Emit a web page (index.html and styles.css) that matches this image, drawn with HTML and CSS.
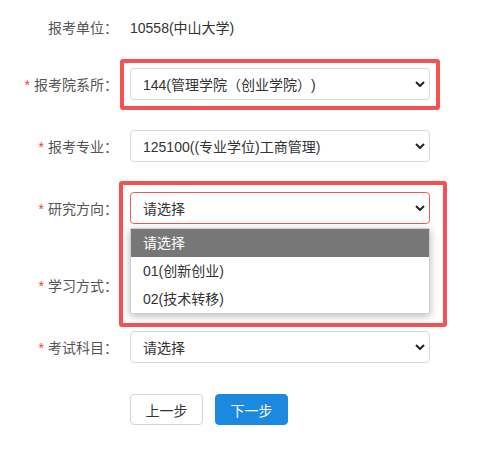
FILE: index.html
```html
<!DOCTYPE html>
<html lang="zh-CN">
<head>
<meta charset="utf-8">
<title>报考信息</title>
<link rel="stylesheet" href="styles.css">
</head>
<body>
<div class="page">
  <div class="form">
    <div class="row row-first">
      <div class="label">报考单位：</div>
      <div class="control value">10558(中山大学)</div>
    </div>
    <div class="row">
      <div class="label"><span class="req">*</span>报考院系所：</div>
      <div class="control select"><span class="sel-text">144(管理学院（创业学院）)</span><svg class="chev" width="10" height="6" viewBox="0 0 10 6"><path d="M1 1 L5 5 L9 1" fill="none" stroke="#222" stroke-width="2"/></svg></div>
    </div>
    <div class="row">
      <div class="label"><span class="req">*</span>报考专业：</div>
      <div class="control select"><span class="sel-text">125100((专业学位)工商管理)</span><svg class="chev" width="10" height="6" viewBox="0 0 10 6"><path d="M1 1 L5 5 L9 1" fill="none" stroke="#222" stroke-width="2"/></svg></div>
    </div>
    <div class="row">
      <div class="label"><span class="req">*</span>研究方向：</div>
      <div class="control select select-error"><span class="sel-text">请选择</span><svg class="chev" width="10" height="6" viewBox="0 0 10 6"><path d="M1 1 L5 5 L9 1" fill="none" stroke="#222" stroke-width="2"/></svg></div>
    </div>
    <div class="row row-tall">
      <div class="label"><span class="req">*</span>学习方式：</div>
      <div class="control select"><span class="sel-text"></span><svg class="chev" width="10" height="6" viewBox="0 0 10 6"><path d="M1 1 L5 5 L9 1" fill="none" stroke="#222" stroke-width="2"/></svg></div>
    </div>
    <div class="row row-last">
      <div class="label"><span class="req">*</span>考试科目：</div>
      <div class="control select"><span class="sel-text">请选择</span><svg class="chev" width="10" height="6" viewBox="0 0 10 6"><path d="M1 1 L5 5 L9 1" fill="none" stroke="#222" stroke-width="2"/></svg></div>
    </div>
    <div class="actions">
      <button class="btn btn-default">上一步</button>
      <button class="btn btn-primary">下一步</button>
    </div>
  </div>

  <ul class="dropdown">
    <li class="opt opt-active">请选择</li>
    <li class="opt">01(创新创业)</li>
    <li class="opt">02(技术转移)</li>
  </ul>

  <div class="mark mark-1"></div>
  <div class="mark mark-2"></div>
</div>
</body>
</html>
```
FILE: styles.css
```css
* { box-sizing: border-box; }
html, body { margin: 0; padding: 0; background: #fff; }
body {
  font-family: "Liberation Sans", "Noto Sans CJK SC", sans-serif;
  font-size: 14px;
  color: #333;
  text-spacing-trim: space-all;
}
.page { position: relative; width: 486px; height: 452px; overflow: hidden; }
.form { padding-top: 11px; }
.row {
  display: flex;
  align-items: center;
  height: 32px;
  margin-bottom: 30px;
}
.row-first { margin-bottom: 25px; }
.row-tall { height: 62px; margin-bottom: 15px; }
.row-tall .select { align-self: flex-start; margin-top: 15px; }
.row-last { margin-bottom: 31px; }
.label {
  flex: none;
  width: 118px;
  text-align: right;
  color: #555;
  white-space: nowrap;
}
.req { color: #f43b3b; margin-right: 4px; }
.control { flex: none; margin-left: 12px; width: 300px; }
.value { color: #333; }
.select {
  height: 32px;
  border: 1px solid #d9d9d9;
  border-radius: 4px;
  display: flex;
  align-items: center;
  justify-content: space-between;
  padding: 0 4px 0 12px;
  background: #fff;
}
.select-error { border-color: #f25a5a; }
.sel-text { color: #333; white-space: nowrap; }
.chev { flex: none; display: block; }
.actions {
  display: flex;
  gap: 12px;
  padding-left: 130px;
}
.btn {
  width: 73px;
  height: 31px;
  border-radius: 4px;
  font-family: inherit;
  font-size: 14px;
  padding: 0;
  cursor: pointer;
}
.btn-default { background: #fff; border: 1px solid #d4d4d4; color: #333; }
.btn-primary { background: #1b89e0; border: 1px solid #1b89e0; color: #fff; }

.dropdown {
  position: absolute;
  left: 130px;
  top: 228px;
  width: 300px;
  margin: 0;
  padding: 0;
  list-style: none;
  background: #fff;
  border: 1px solid #cfcfcf;
  box-shadow: 0 2px 8px rgba(0, 0, 0, 0.28);
}
.opt {
  height: 28px;
  line-height: 28px;
  padding-left: 12px;
  color: #333;
  white-space: nowrap;
}
.opt-active { background: #777; color: #fff; }

.mark {
  position: absolute;
  border: 4px solid #f45252;
  border-radius: 3px;
}
.mark-1 { left: 120px; top: 59px; width: 320px; height: 51px; }
.mark-2 { left: 119px; top: 181px; width: 328px; height: 146px; }
```
